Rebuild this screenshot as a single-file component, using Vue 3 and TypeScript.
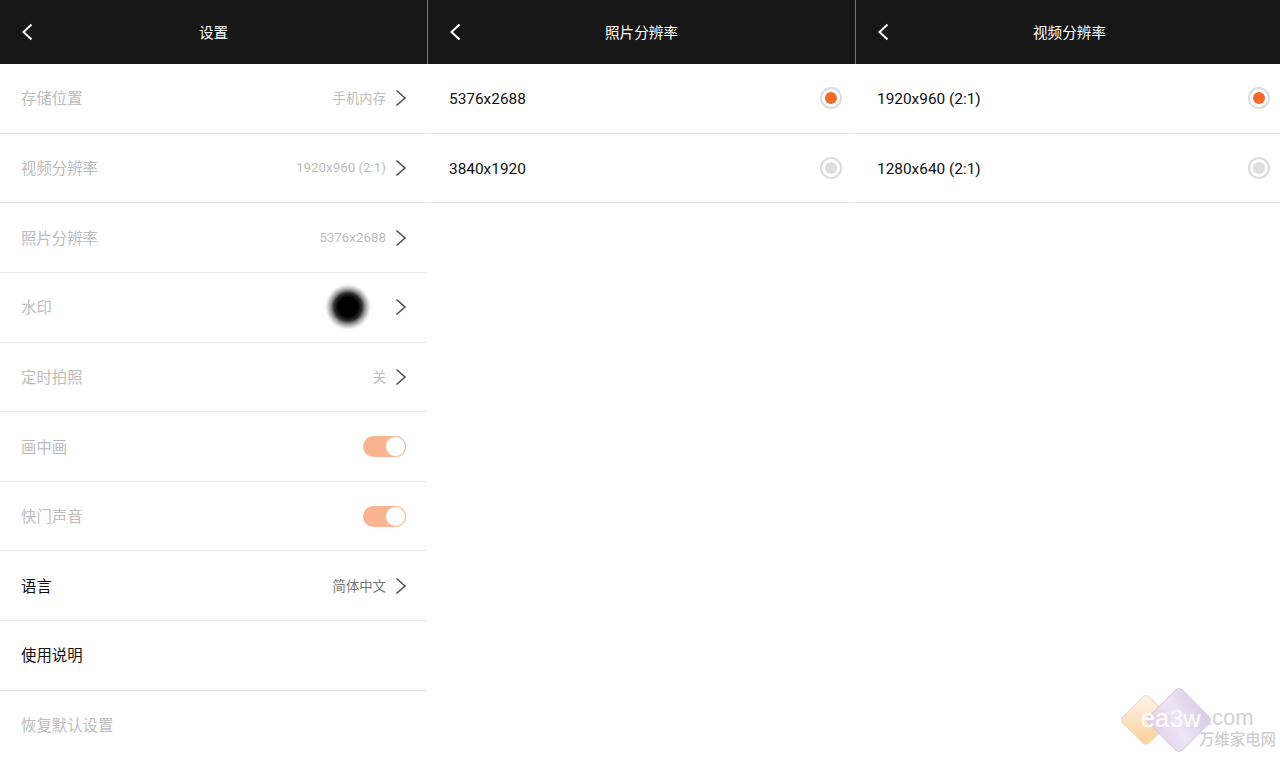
<script setup lang="ts">
interface Row {
  label: string
  value?: string
  kind?: 'chevron' | 'toggle' | 'blob' | 'none'
  active?: boolean
}
const settings: Row[] = [
  { label: '存储位置', value: '手机内存', kind: 'chevron' },
  { label: '视频分辨率', value: '1920x960 (2:1)', kind: 'chevron' },
  { label: '照片分辨率', value: '5376x2688', kind: 'chevron' },
  { label: '水印', kind: 'blob' },
  { label: '定时拍照', value: '关', kind: 'chevron' },
  { label: '画中画', kind: 'toggle' },
  { label: '快门声音', kind: 'toggle' },
  { label: '语言', value: '简体中文', kind: 'chevron', active: true },
  { label: '使用说明', kind: 'none', active: true },
  { label: '恢复默认设置', kind: 'none' },
]
const panels = [
  { title: '照片分辨率', options: ['5376x2688', '3840x1920'] },
  { title: '视频分辨率', options: ['1920x960 (2:1)', '1280x640 (2:1)'] },
]
</script>

<template>
  <div class="screen">
    <section class="panel">
      <header class="bar">
        <svg class="back" width="13" height="18" viewBox="0 0 13 18"><path d="M10.5 1.5 2.5 9l8 7.5" fill="none" stroke="#fff" stroke-width="2" /></svg>
        <h1>设置</h1>
      </header>
      <div v-for="row in settings" :key="row.label" class="row" :class="{ active: row.active }">
        <span class="label">{{ row.label }}</span>
        <span v-if="row.value" class="value">{{ row.value }}</span>
        <span v-if="row.kind === 'blob'" class="blob"></span>
        <svg v-if="row.kind === 'chevron' || row.kind === 'blob'" class="chev" width="12" height="18" viewBox="0 0 12 18"><path d="M1.5 1.5 10 9l-8.500 7.500" fill="none" stroke="#4a4a4a" stroke-width="1.5" /></svg>
        <span v-if="row.kind === 'toggle'" class="toggle"><i></i></span>
      </div>
    </section>

    <section v-for="p in panels" :key="p.title" class="panel">
      <header class="bar">
        <svg class="back" width="13" height="18" viewBox="0 0 13 18"><path d="M10.5 1.5 2.5 9l8 7.5" fill="none" stroke="#fff" stroke-width="2" /></svg>
        <h1>{{ p.title }}</h1>
      </header>
      <div v-for="(o, i) in p.options" :key="o" class="row opt">
        <span class="label">{{ o }}</span>
        <span class="radio" :class="{ on: i === 0 }"><i></i></span>
      </div>
    </section>

    <div class="mark">
      <span class="dia orange"></span>
      <span class="dia purple"></span>
      <span class="ea">ea</span>
      <span class="w3">3w</span>
      <span class="com">.com</span>
      <span class="cn">万维家电网</span>
    </div>
  </div>
</template>

<style>
html, body { margin: 0; background: #fff; }
</style>

<style scoped>
.screen {
  position: relative;
  width: 1280px;
  height: 759px;
  overflow: hidden;
  display: grid;
  grid-template-columns: 427px 427px 427px;
  column-gap: 1px;
  background: #fff;
  font-family: Roboto, "Noto Sans CJK SC", sans-serif;
}
.bar {
  position: relative;
  height: 64px;
  background: #171717;
  display: flex;
  align-items: center;
  justify-content: center;
  box-shadow: 1px 0 0 #777;
}
.bar h1 {
  margin: 0 0 2px;
  color: #fff;
  font-size: 14.6px;
  font-weight: 400;
}
.back { position: absolute; left: 21px; top: 23px; }
.row {
  height: 68.65px;
  border-bottom: 1px solid #e8e8e8;
  display: flex;
  align-items: center;
  padding: 0 21px;
  color: #bdbdbd;
  font-size: 15.4px;
}
.row.active { color: #111; }
.row .label { flex: 1; padding-bottom: 2px; }
.value { font-size: 13.35px; color: #bdbdbd; margin-right: 9px; padding-bottom: 1px; }
.active .value { color: #777; }
.chev { flex: none; margin-right: -1px; }
.blob {
  width: 46px;
  height: 46px;
  margin-right: 24px;
  border-radius: 50%;
  background: radial-gradient(circle closest-side, #000 42%, rgba(0, 0, 0, 0.82) 60%, rgba(0, 0, 0, 0.4) 75%, rgba(0, 0, 0, 0.12) 90%, rgba(0, 0, 0, 0) 100%);
}
.toggle {
  position: relative;
  width: 43px;
  height: 21px;
  border-radius: 11px;
  background: #fbb492;
}
.toggle i {
  position: absolute;
  right: 0;
  top: 0;
  width: 19px;
  height: 19px;
  border: 1px solid #fbb492;
  border-radius: 50%;
  background: #fff;
}
.opt { color: #111; padding-right: 13px; }
.opt .label { padding-bottom: 0; padding-top: 2px; }
.radio {
  width: 18px;
  height: 18px;
  border: 2px solid #dcdcdc;
  border-radius: 50%;
  display: flex;
  align-items: center;
  justify-content: center;
}
.radio i {
  width: 12px;
  height: 12px;
  border-radius: 50%;
  background: #dedede;
}
.radio.on i { background: #f4692a; }
.mark {
  position: absolute;
  left: 1100px;
  top: 670px;
  width: 180px;
  height: 89px;
}
.dia { position: absolute; transform: rotate(45deg); border-radius: 5px; box-sizing: border-box; }
.orange {
  left: 27px; top: 31px; width: 38px; height: 38px;
  background: linear-gradient(135deg, #fdf1e4 10%, #f9d29f 90%);
  border: 1px solid #f2cfae;
}
.purple {
  left: 55px; top: 26px; width: 48px; height: 48px;
  background: linear-gradient(200deg, rgba(214, 196, 230, 0.9), rgba(236, 224, 243, 0.85) 55%, rgba(222, 205, 234, 0.9));
  border: 1px solid #d5c4e4;
}
.ea, .w3, .com {
  position: absolute;
  font-family: "Liberation Sans", sans-serif;
  color: #fff;
  line-height: 1;
}
.ea { left: 41px; top: 36px; font-size: 25px; }
.w3 { left: 70px; top: 37px; font-size: 24px; }
.com { left: 106px; top: 37px; font-size: 22px; color: #d2d2d2; }
.cn {
  position: absolute;
  left: 99px;
  top: 63px;
  font-size: 15.4px;
  line-height: 1;
  color: #cfcfcf;
  font-weight: 500;
  white-space: nowrap;
}
</style>
